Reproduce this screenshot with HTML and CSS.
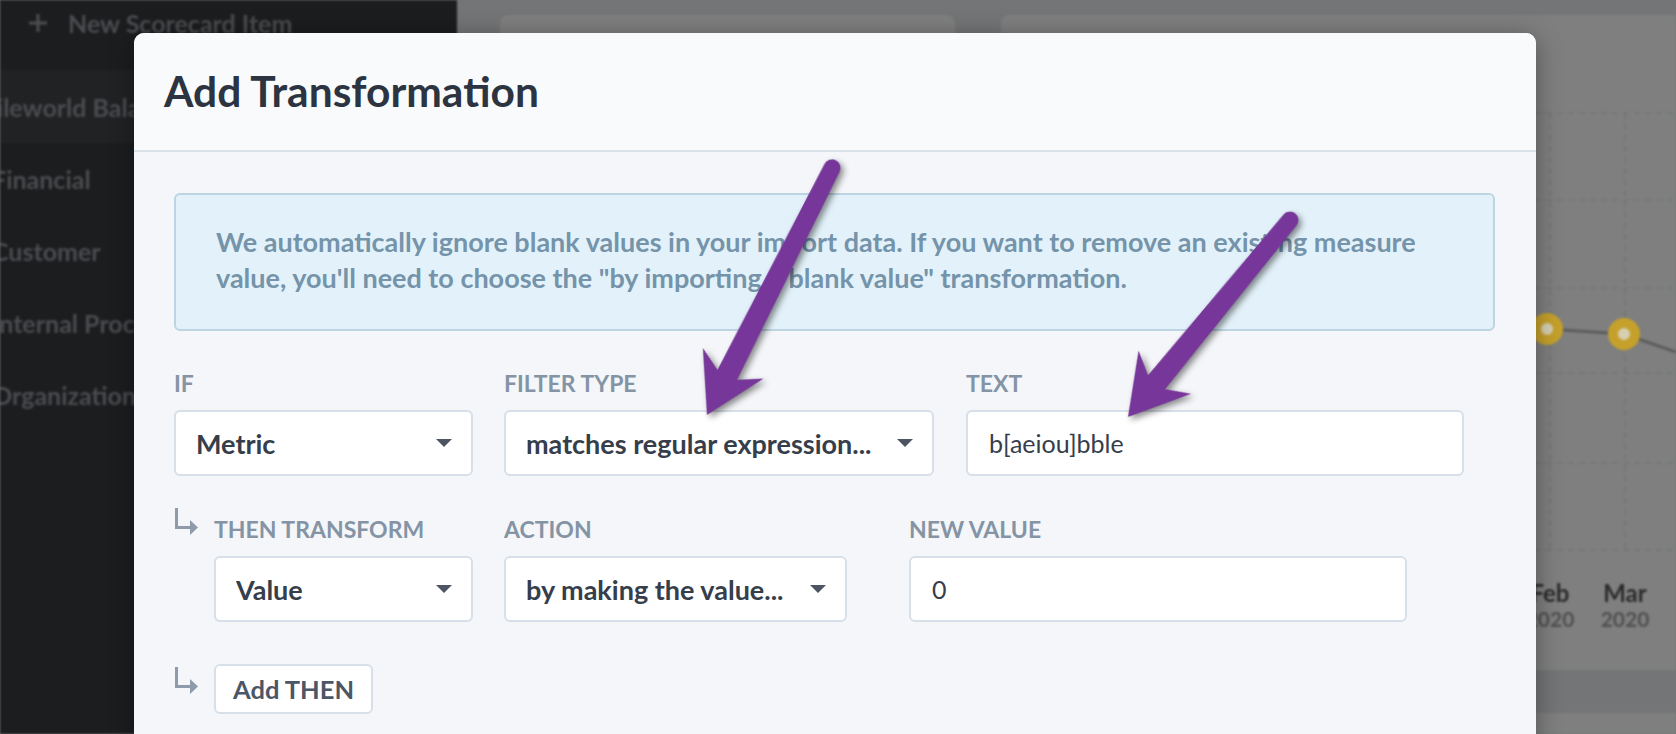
FILE: index.html
```html
<!DOCTYPE html>
<html lang="en">
<head>
<meta charset="utf-8">
<title>Add Transformation</title>
<link rel="stylesheet" href="styles.css">
</head>
<body>
<div class="backdrop">
  <aside class="sidebar">
    <div class="new-item">
      <svg class="plus" width="18" height="18" viewBox="0 0 18 18"><path d="M9 0V18M0 9H18" stroke="#4d4e51" stroke-width="3"/></svg>
      <span>New Scorecard Item</span>
    </div>
    <div class="scorecard"><span>Mobileworld Balanced Scorecard</span></div>
    <ul class="perspectives">
      <li>Financial</li>
      <li>Customer</li>
      <li>Internal Process</li>
      <li>Organizational Capacity</li>
    </ul>
  </aside>
  <main class="dash">
    <div class="cards">
      <div class="card card-a"></div>
      <div class="card card-b">
        <svg class="chart" width="675" height="655" viewBox="0 0 675 655">
          <g class="grid">
            <path d="M380 98H675M380 185H675M380 273H675M380 358H675M380 448H675M380 535H675"/>
            <path d="M549 98V535M624 98V535M699 98V535"/>
          </g>
          <path class="series" d="M546 314L623 319L675 337"/>
          <circle class="dot" cx="546" cy="314" r="11"/>
          <circle class="dot" cx="623" cy="319" r="11"/>
          <g class="axis">
            <text x="549" y="587" class="month">Feb</text>
            <text x="549" y="612" class="year">2020</text>
            <text x="624" y="587" class="month">Mar</text>
            <text x="624" y="612" class="year">2020</text>
            <text x="699" y="587" class="month">Apr</text>
            <text x="699" y="612" class="year">2020</text>
          </g>
        </svg>
      </div>
    </div>
    <div class="card card-c"></div>
  </main>
</div>

<div class="modal">
  <header class="modal-header">
    <h1 class="modal-title">Add Transformation</h1>
  </header>
  <div class="modal-body">
    <div class="notice">We automatically ignore blank values in your import data. If you want to remove an existing measure value, you'll need to choose the "by importing a blank value" transformation.</div>

    <div class="row row-if">
      <div class="field w-if">
        <div class="label">IF</div>
        <div class="control select"><span class="val">Metric</span><i class="caret"></i></div>
      </div>
      <div class="field w-filter">
        <div class="label">Filter Type</div>
        <div class="control select"><span class="val">matches regular expression...</span><i class="caret"></i></div>
      </div>
      <div class="field w-text">
        <div class="label">Text</div>
        <div class="control input"><span class="txt">b[aeiou]bble</span></div>
      </div>
    </div>

    <div class="row row-then">
      <div class="branch">
        <svg width="24" height="28" viewBox="0 0 24 28"><path d="M1.5 0V19.5H17" fill="none" stroke="#8f9bab" stroke-width="3"/><path d="M15 12L23 19.5L15 27Z" fill="#8f9bab"/></svg>
      </div>
      <div class="field w-value">
        <div class="label">Then Transform</div>
        <div class="control select"><span class="val">Value</span><i class="caret"></i></div>
      </div>
      <div class="field w-action">
        <div class="label">Action</div>
        <div class="control select"><span class="val">by making the value...</span><i class="caret"></i></div>
      </div>
      <div class="field w-newval">
        <div class="label">New Value</div>
        <div class="control input"><span class="txt">0</span></div>
      </div>
    </div>

    <div class="row row-add">
      <div class="branch">
        <svg class="branch-add" width="24" height="28" viewBox="0 0 24 28"><path d="M1.5 0V19.5H17" fill="none" stroke="#8f9bab" stroke-width="3"/><path d="M15 12L23 19.5L15 27Z" fill="#8f9bab"/></svg>
      </div>
      <button class="btn">Add THEN</button>
    </div>
  </div>
</div>

<svg class="annotations" width="1676" height="734" viewBox="0 0 1676 734">
  <g class="arrow">
    <path transform="translate(707 415) rotate(-63.16)" d="M0 0L58 -34L45 -11L277 -8.5A8.5 8.5 0 0 1 277 8.5L45 11L58 34Z"/>
    <path transform="translate(1128 417) rotate(-50.56)" d="M0 0L58 -34L45 -11L255 -8.5A8.5 8.5 0 0 1 255 8.5L45 11L58 34Z"/>
  </g>
</svg>
</body>
</html>
```

FILE: styles.css
```css
* { box-sizing: border-box; }

body {
  margin: 0;
  width: 1676px;
  height: 734px;
  overflow: hidden;
  position: relative;
  font-family: Lato, "Liberation Sans", sans-serif;
  background: #737577;
}

/* ---------- dimmed app behind the modal ---------- */
.backdrop {
  display: flex;
  height: 734px;
  filter: blur(1.3px);
}

.sidebar {
  width: 457px;
  flex: none;
  background: #1c1d1f;
  color: #4b4c4f;
  font-weight: 700;
  font-size: 25px;
  overflow: hidden;
  white-space: nowrap;
}

.new-item {
  height: 46px;
  display: flex;
  align-items: center;
  padding-left: 29px;
  gap: 21px;
}

.scorecard {
  margin-top: 24px;
  height: 73px;
  display: flex;
  align-items: center;
  background: #212224;
}
.scorecard span { margin-left: -55px; }

.perspectives {
  list-style: none;
  margin: 0;
  padding: 0;
}
.perspectives li {
  height: 72px;
  line-height: 72px;
  margin-left: -8px;
}

.dash {
  flex: 1;
  padding-top: 15px;
  overflow: hidden;
}

.cards {
  display: flex;
  gap: 46px;
  padding-left: 43px;
}

.card {
  background: #7f7f7f;
  border-radius: 8px 8px 0 0;
}
.card-a { width: 455px; height: 655px; }
.card-b { flex: 1; height: 655px; border-radius: 8px 0 0 0; }
.card-c { margin: 43px 0 0 544px; height: 60px; border-radius: 8px 0 0 0; }

.chart { display: block; }
.grid path { stroke: #767778; stroke-width: 2; stroke-dasharray: 6 5; fill: none; }
.series { stroke: #5c5c5c; stroke-width: 3; fill: none; }
.dot { fill: #d6cfb3; stroke: #c5a12b; stroke-width: 10; }
.axis text { text-anchor: middle; font-family: Lato, sans-serif; font-weight: 700; }
.axis .month { font-size: 24px; fill: #2a2a2a; }
.axis .year { font-size: 21px; fill: #505050; }

/* ---------- modal ---------- */
.modal {
  position: absolute;
  left: 134px;
  top: 33px;
  width: 1402px;
  height: 740px;
  background: #f4f6f9;
  border-radius: 10px 10px 0 0;
  box-shadow: 0 4px 26px rgba(0, 0, 0, 0.35);
  overflow: hidden;
}

.modal-header {
  height: 119px;
  background: #f9fafc;
  border-bottom: 2px solid #d9e1e9;
  display: flex;
  align-items: center;
  padding: 0 0 2px 30px;
}

.modal-title {
  margin: 0;
  font-size: 42.5px;
  font-weight: 700;
  color: #2b3440;
}

.modal-body {
  padding: 41px 41px 0 40px;
}

.notice {
  background: #e3f2fa;
  border: 2px solid #bdd5e2;
  border-radius: 6px;
  color: #7594aa;
  font-weight: 700;
  font-size: 27px;
  line-height: 36px;
  padding: 28.5px 40px 33.5px;
}

.row {
  display: flex;
}
.row-if { margin-top: 40px; }
.row-then { margin-top: 41px; }
.row-add { margin-top: 42px; }

.branch { width: 40px; flex: none; }
.branch svg { display: block; margin: -9px 0 0 1px; }
.branch .branch-add { margin-top: 3px; }

.field { flex: none; }
.w-if { width: 299px; }
.w-filter { width: 430px; margin-left: 31px; }
.w-text { width: 498px; margin-left: 32px; }
.w-value { width: 259px; }
.w-action { width: 343px; margin-left: 31px; }
.w-newval { width: 498px; margin-left: 62px; }

.label {
  font-size: 23px;
  line-height: 24px;
  font-weight: 700;
  color: #8494a4;
  text-transform: uppercase;
  margin-bottom: 15px;
  white-space: nowrap;
}

.control {
  height: 66px;
  border: 2px solid #d7dfe8;
  border-radius: 6px;
  background: #fff;
  display: flex;
  align-items: center;
  color: #353e4a;
  white-space: nowrap;
}

.select {
  padding: 0 19px 0 20px;
  font-size: 27px;
  font-weight: 700;
}
.select .val { overflow: hidden; }

.caret {
  margin-left: auto;
  width: 0;
  height: 0;
  border-left: 8px solid transparent;
  border-right: 8px solid transparent;
  border-top: 8px solid #4d5562;
  flex: none;
}

.input {
  padding: 0 20px 0 21px;
  font-size: 25px;
  font-weight: 400;
}

.btn {
  width: 159px;
  height: 50px;
  border: 2px solid #d7dfe8;
  border-radius: 6px;
  background: #fff;
  font-family: inherit;
  font-size: 25.5px;
  font-weight: 700;
  color: #4b5666;
  padding: 0;
}

/* ---------- annotation arrows ---------- */
.annotations {
  position: absolute;
  left: 0;
  top: 0;
  pointer-events: none;
}
.arrow path {
  fill: #77379a;
}
.arrow {
  filter: drop-shadow(3px 3px 3px rgba(0, 0, 0, 0.45));
}
```
